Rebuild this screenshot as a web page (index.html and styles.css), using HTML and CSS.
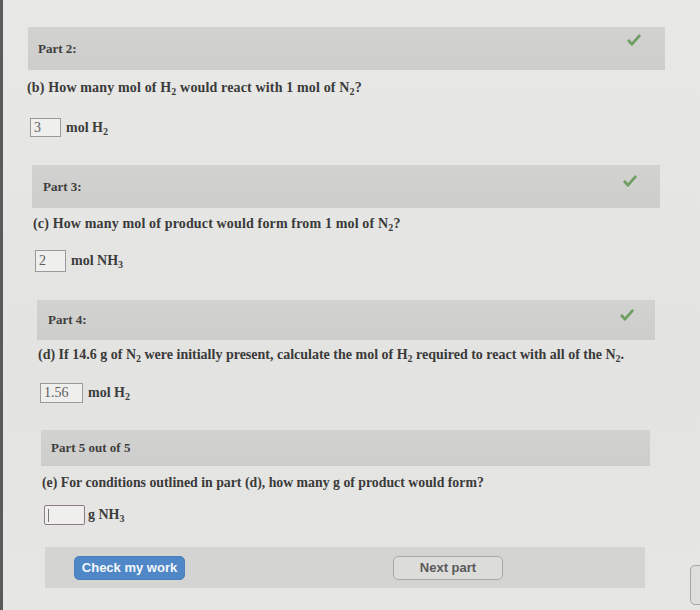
FILE: index.html
```html
<!DOCTYPE html>
<html>
<head>
<meta charset="utf-8">
<link rel="stylesheet" href="styles.css">
</head>
<body>
<div class="page">
  <section class="part p2">
    <div class="bar"><span class="label">Part 2:</span><svg class="check" viewBox="0 0 14 12"><path d="M1.8 6.8 L5 10.2 L12.3 1.8"/></svg></div>
    <p class="q">(b) How many mol of H<sub>2</sub> would react with 1 mol of N<sub>2</sub>?</p>
    <div class="ans"><span class="box w31">3</span><span class="unit">mol H<sub>2</sub></span></div>
  </section>
  <section class="part p3">
    <div class="bar"><span class="label">Part 3:</span><svg class="check" viewBox="0 0 14 12"><path d="M1.8 6.8 L5 10.2 L12.3 1.8"/></svg></div>
    <p class="q">(c) How many mol of product would form from 1 mol of N<sub>2</sub>?</p>
    <div class="ans"><span class="box w31">2</span><span class="unit">mol NH<sub>3</sub></span></div>
  </section>
  <section class="part p4">
    <div class="bar"><span class="label">Part 4:</span><svg class="check" viewBox="0 0 14 12"><path d="M1.8 6.8 L5 10.2 L12.3 1.8"/></svg></div>
    <p class="q">(d) If 14.6 g of N<sub>2</sub> were initially present, calculate the mol of H<sub>2</sub> required to react with all of the N<sub>2</sub>.</p>
    <div class="ans"><span class="box w43">1.56</span><span class="unit">mol H<sub>2</sub></span></div>
  </section>
  <section class="part p5">
    <div class="bar"><span class="label">Part 5 out of 5</span></div>
    <p class="q q5">(e) For conditions outlined in part (d), how many g of product would form?</p>
    <div class="ans"><span class="box w41 empty"><span class="caret"></span></span><span class="unit tight">g NH<sub>3</sub></span></div>
  </section>
  <div class="actions">
    <button class="btn primary">Check my work</button>
    <button class="btn secondary">Next part</button>
  </div>
  <div class="edge-btn"></div>
</div>
</body>
</html>
```
FILE: styles.css
```css
html, body {
  margin: 0;
  padding: 0;
}
body {
  width: 700px;
  height: 610px;
  overflow: hidden;
  background: #e5e5e3;
  font-family: "Liberation Serif", "Times New Roman", serif;
  color: #3c3c3c;
}
.page {
  position: relative;
  height: 610px;
  border-left: 3px solid #5a5a5a;
  box-sizing: border-box;
  padding-top: 27px;
  background: linear-gradient(180deg, #e8e8e6 0%, #e3e3e1 60%, #e6e6e4 100%);
}
.bar {
  display: flex;
  align-items: center;
  justify-content: space-between;
  background: linear-gradient(180deg, #d2d2d1 0%, #cdcdcc 100%);
  box-sizing: border-box;
}
.label {
  font-weight: bold;
  font-size: 13px;
  color: #3e3e3e;
}
.check {
  width: 14px;
  height: 12px;
  fill: none;
  stroke: #6f9f63;
  stroke-width: 2.8;
  stroke-linecap: round;
  stroke-linejoin: round;
}
.q {
  margin: 0;
  font-weight: bold;
  font-size: 14px;
  line-height: 18px;
  color: #3a3a3a;
  letter-spacing: 0.15px;
}
.q5 { letter-spacing: 0; }
sub {
  font-size: 10px;
  line-height: 0;
  vertical-align: -3px;
}
.ans {
  display: flex;
  align-items: center;
}
.box {
  display: inline-flex;
  align-items: center;
  box-sizing: border-box;
  border: 1px solid #9a9a9a;
  background: #efefed;
  font-size: 14px;
  color: #5e5e5e;
  padding-left: 3px;
}
.box.empty {
  border: 1.5px solid #8a7c86;
  border-radius: 2px;
}
.caret {
  width: 1px;
  height: 13px;
  background: #777;
}
.w31 { width: 31px; }
.w43 { width: 43px; }
.w41 { width: 41px; }
.unit {
  font-weight: bold;
  font-size: 14px;
  margin-left: 5px;
  color: #3c3c3c;
}
.unit.tight { margin-left: 3px; }

/* section geometry (perspective of the photo: each block shifts right) */
.p2 { margin-left: 25px; width: 637px; }
.p2 .bar { height: 43px; padding: 0 24px 0 10px; }
.p2 .check { margin-top: -18px; }
.p2 .q { margin-top: 9px; margin-left: -1px; }
.p2 .ans { margin-top: 21px; margin-left: 2px; }
.p2 .box { height: 19px; }

.p3 { margin-left: 29px; width: 628px; margin-top: 28px; }
.p3 .bar { height: 43px; padding: 0 23px 0 11px; }
.p3 .check { margin-top: -12px; }
.p3 .q { margin-top: 7px; margin-left: 1px; }
.p3 .ans { margin-top: 17px; margin-left: 3px; }
.p3 .box { height: 22px; }

.p4 { margin-left: 34px; width: 618px; margin-top: 28px; }
.p4 .bar { height: 40px; padding: 0 21px 0 11px; }
.p4 .check { margin-top: -11px; }
.p4 .q { margin-top: 6px; margin-left: 1px; letter-spacing: 0; }
.p4 .ans { margin-top: 19px; margin-left: 3px; }
.p4 .box { height: 20px; }

.p5 { margin-left: 38px; width: 609px; margin-top: 27px; }
.p5 .bar { height: 36px; padding: 0 20px 0 10px; }
.p5 .q { margin-top: 8px; margin-left: 1px; font-size: 13.8px; }
.p5 .ans { margin-top: 13px; margin-left: 3px; }
.p5 .box { height: 20px; }

.actions {
  margin-left: 42px;
  width: 600px;
  margin-top: 22px;
  height: 41px;
  background: #d4d4d3;
  display: flex;
  align-items: center;
  box-sizing: border-box;
  padding-left: 29px;
}
.btn {
  font-family: "Liberation Sans", Arial, sans-serif;
  font-weight: bold;
  font-size: 13px;
  height: 24px;
  box-sizing: border-box;
  border-radius: 5px;
  padding: 0;
}
.primary {
  width: 111px;
  background: #4f87c7;
  color: #f4f7fb;
  border: 1px solid #4a7fbd;
}
.secondary {
  width: 110px;
  margin-left: 208px;
  background: #dcdcdb;
  color: #5a5a5a;
  border: 1px solid #a9a9a9;
}
.edge-btn {
  position: absolute;
  left: 687px;
  top: 565px;
  width: 30px;
  height: 40px;
  box-sizing: border-box;
  border: 1px solid #a6a6a6;
  border-radius: 5px;
  background: #dededd;
}
```
